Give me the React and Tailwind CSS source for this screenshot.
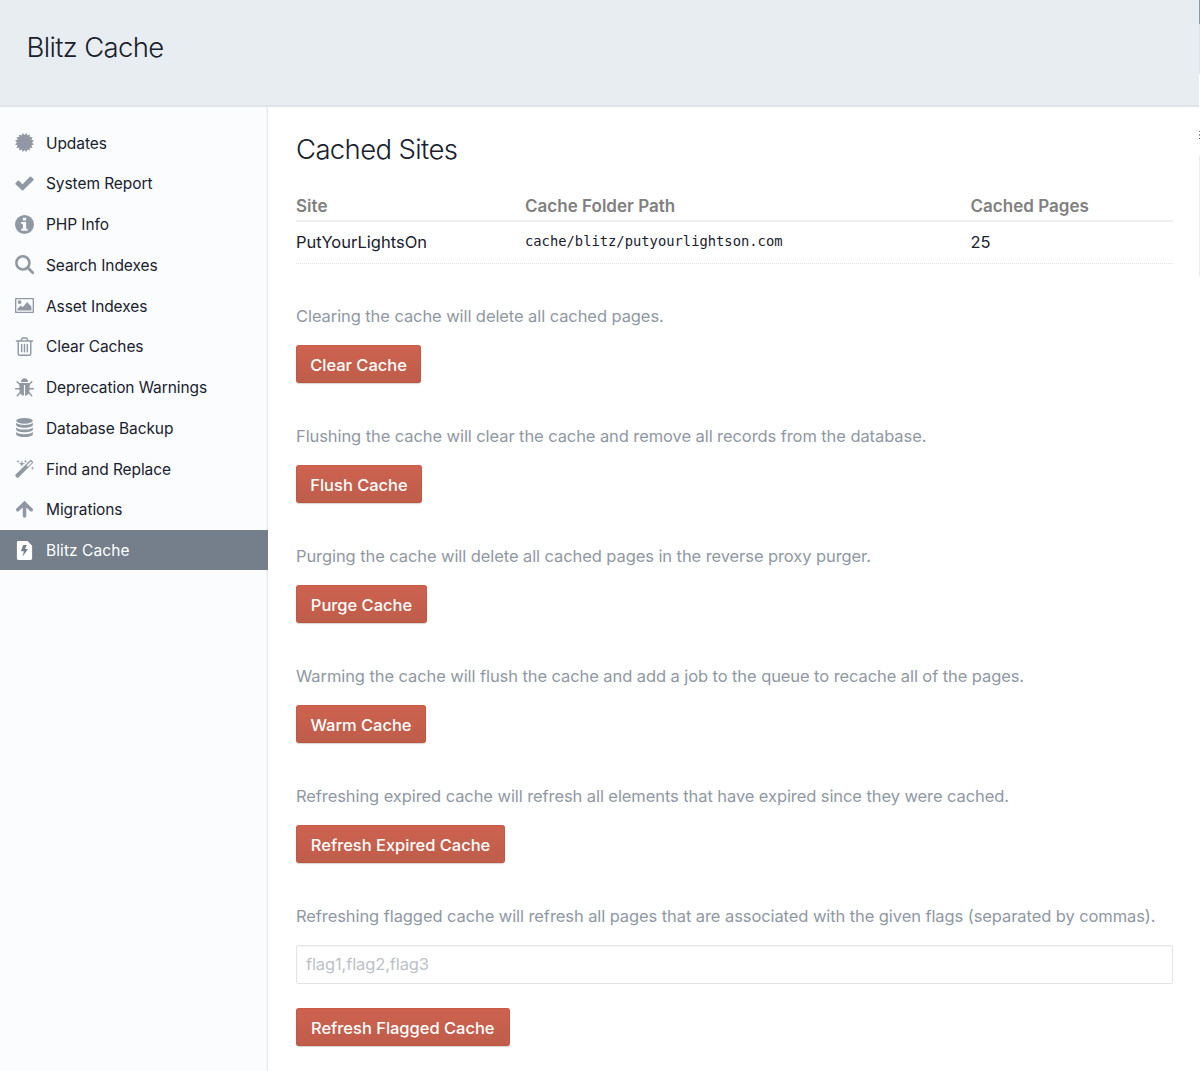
const burstPoints = Array.from({ length: 32 }, (_, i) => {
  const radius = i % 2 === 0 ? 10.2 : 7.9;
  const angle = ((i + 1) * Math.PI) / 16;
  return `${(10 + radius * Math.sin(angle)).toFixed(2)},${(10 - radius * Math.cos(angle)).toFixed(2)}`;
}).join(" ");

const icons = {
  burst: <polygon points={burstPoints} />,
  check: <path d="M0.600 9.400 2.900 7.100c.4-.4.9-.4 1.300 0l3.700 3.600 7.800-7.800c.4-.4.9-.4 1.300 0l2.400 2.400c.4.4.4.9 0 1.300L8.600 17c-.4.4-.9.4-1.300 0L.6 10.700c-.4-.4-.4-.9 0-1.300z" />,
  info: (
    <path
      fillRule="evenodd"
      d="M10 0a10 10 0 1 1 0 20A10 10 0 0 1 10 0zM8.3 2.8v2.9h3.4V2.8zM6.6 7.4v2h1.7v5H6.6v2.2h6.8v-2.2h-1.7v-7z"
    />
  ),
  search: (
    <g fill="none" stroke="currentColor">
      <circle cx="8.3" cy="8.3" r="6.9" strokeWidth="2.7" />
      <path d="m13.2 13.2 5.5 5.5" strokeWidth="2.9" strokeLinecap="round" />
    </g>
  ),
  image: (
    <>
      <path fillRule="evenodd" d="M1 2h18c.6 0 1 .4 1 1v14c0 .6-.4 1-1 1H1c-.6 0-1-.4-1-1V3c0-.6.4-1 1-1zm.4 1.4v13.2h17.2V3.400z" />
      <circle cx="4.8" cy="6.500" r="1.9" />
      <path d="M2.7 15.3v-2l3.400-3.300 2 1.900 4.700-5.500 4.500 5v3.900z" />
    </>
  ),
  trash: (
    <g fill="none" stroke="currentColor" strokeWidth="1.5" strokeLinecap="round" strokeLinejoin="round">
      <path d="M1.500 4.200h17M6.400 4l.8-2.200c.2-.6.5-.8 1-.8h3.600c.5 0 .8.200 1 .8l.8 2.200M3.400 4.500v13.100c0 .9.600 1.600 1.500 1.600h10.200c.9 0 1.500-.7 1.500-1.600V4.500M7 7.800v7.800M10 7.800v7.800M13 7.800v7.800" />
    </g>
  ),
  bug: (
    <>
      <path d="M6.300 4.300C6.300 1.700 7.900.2 10 .2s3.700 1.500 3.700 4.100z" />
      <path d="M4.700 5.300h10.600v7.200c0 3.500-1.700 5.700-4.700 6.200V7.300H9.400v11.400c-3-.5-4.700-2.700-4.700-6.200z" />
      <path
        d="m5.300 7-3-3M14.700 7l3-3M5.200 11.300H.7M14.800 11.300h4.500M5.700 14.900l-3.300 3.700M14.300 14.900l3.300 3.700"
        fill="none"
        stroke="currentColor"
        strokeWidth="1.5"
        strokeLinecap="round"
      />
    </>
  ),
  database: (
    <>
      <ellipse cx="10" cy="3" rx="8.800" ry="3" />
      <path d="M1.200 5.100C3 6.700 6.300 7.400 10 7.400s7-.7 8.800-2.300v2.300c0 1.600-4 2.900-8.800 2.900S1.200 9 1.200 7.400z" />
      <path d="M1.200 9.900c1.800 1.600 5.100 2.300 8.800 2.300s7-.7 8.800-2.300v2.300c0 1.600-4 2.900-8.800 2.900s-8.800-1.300-8.800-2.900z" />
      <path d="M1.200 14.700C3 16.300 6.300 17 10 17s7-.7 8.800-2.300V17c0 1.700-4 3-8.800 3s-8.800-1.300-8.800-3z" />
    </>
  ),
  wand: (
    <>
      <path
        fillRule="evenodd"
        d="M.4 16.700 15.900 1.200c.4-.4.9-.4 1.300 0l1.700 1.700c.4.4.4.9 0 1.300L3.400 19.700c-.4.4-.9.4-1.300 0L.4 18c-.4-.4-.4-.9 0-1.300zM16.500 2.600l-4.300 4.300 1.300 1.300 4.300-4.300z"
      />
      <path d="m3.200.6.5 1.400 1.400.5-1.400.5-.5 1.400L2.700 3l-1.400-.5L2.700 2zM7.200 1.500l.8 2.600 2.600.8L8 5.700l-.8 2.600-.8-2.600-2.600-.8 2.600-.8zM11 .5l.5 1.500 1.400.5-1.400.5-.5 1.400-.5-1.400-1.400-.5L10.500 2zM18.300 7.600l.5 1.500 1.400.5-1.400.5-.5 1.400-.5-1.400-1.400-.5 1.400-.5z" />
    </>
  ),
  arrow: (
    <path
      d="M10 16.800V4.500M2.900 10.200 10 3.400l7.100 6.800"
      fill="none"
      stroke="currentColor"
      strokeWidth="3.700"
      strokeLinecap="round"
      strokeLinejoin="miter"
    />
  ),
  blitz: (
    <path
      fillRule="evenodd"
      d="M3.500 0h9.700L18 4.900v13.600c0 .9-.6 1.500-1.500 1.500h-13c-.9 0-1.500-.6-1.500-1.500v-17C2 .6 2.600 0 3.500 0zM8.600 4.300 6.300 10.900h3l-1.200 5.300 5.600-7.800h-3l1.700-4.100z"
    />
  ),
};

const navItems = [
  ["Updates", "burst"],
  ["System Report", "check"],
  ["PHP Info", "info"],
  ["Search Indexes", "search"],
  ["Asset Indexes", "image"],
  ["Clear Caches", "trash"],
  ["Deprecation Warnings", "bug"],
  ["Database Backup", "database"],
  ["Find and Replace", "wand"],
  ["Migrations", "arrow"],
  ["Blitz Cache", "blitz"],
];

const actions = [
  { text: "Clearing the cache will delete all cached pages.", label: "Clear Cache", width: "w-[125px]" },
  { text: "Flushing the cache will clear the cache and remove all records from the database.", label: "Flush Cache", width: "w-[126px]" },
  { text: "Purging the cache will delete all cached pages in the reverse proxy purger.", label: "Purge Cache", width: "w-[131px]" },
  { text: "Warming the cache will flush the cache and add a job to the queue to recache all of the pages.", label: "Warm Cache", width: "w-[130px]" },
  { text: "Refreshing expired cache will refresh all elements that have expired since they were cached.", label: "Refresh Expired Cache", width: "w-[209px]" },
];

function Icon({ name }) {
  return (
    <svg viewBox="0 0 20 20" fill="currentColor" className="size-[19px] shrink-0 overflow-visible">
      {icons[name]}
    </svg>
  );
}

function NavItem({ label, icon, active }) {
  return (
    <li
      className={
        active
          ? "flex h-[40.75px] items-center gap-3 bg-[#747f8b] pl-[15px] text-white"
          : "flex h-[40.75px] items-center gap-3 pl-[15px] text-[#8f98a3]"
      }
    >
      <Icon name={icon} />
      <span
        className={
          active
            ? "whitespace-nowrap pt-[1.5px] text-[15.5px] tracking-[0.08px] text-white"
            : "whitespace-nowrap pt-[1.5px] text-[15.5px] tracking-[-0.08px] text-[#18212d]"
        }
      >
        {label}
      </span>
    </li>
  );
}

function SubmitButton({ label, width }) {
  return (
    <button
      className={`${width} block h-[38.5px] whitespace-nowrap rounded-[3px] bg-linear-to-b from-[#cd6350] to-[#bf5c4a] pt-[3px] text-center text-[16.5px] font-medium tracking-[-0.02px] text-white shadow-[inset_0_0_0_1px_rgba(196,70,35,0.28),0_1px_1px_rgba(31,41,51,0.2)]`}
    >
      {label}
    </button>
  );
}

function Description({ children }) {
  return <p className="whitespace-nowrap leading-6 tracking-[-0.085px] text-[#8f98a3]">{children}</p>;
}

export default function App() {
  return (
    <div className="flex h-[1071px] w-[1200px] overflow-hidden bg-white font-['Inter','Liberation_Sans',sans-serif] text-[16.5px] text-[#18212d]">
      <div className="flex w-[1199px] flex-col">
        <header className="h-[107px] shrink-0 border-b-2 border-[#e1e5e9] bg-[#e8edf1] pl-[26.5px] pt-[29px]">
          <h1 className="text-[27.5px] font-[350] leading-9 tracking-[-0.65px]">Blitz Cache</h1>
        </header>
        <div className="flex flex-1">
          <nav className="w-[267.5px] shrink-0 bg-[#fbfcfe] pt-[15.2px] shadow-[inset_-1.5px_0_0_#ebecee]">
            <ul>
              {navItems.map(([label, icon]) => (
                <NavItem key={label} label={label} icon={icon} active={icon === "blitz"} />
              ))}
            </ul>
          </nav>
          <main className="w-[905.5px] shrink-0 pl-[28.5px] pt-6">
            <h2 className="text-[27.5px] font-[350] leading-9 tracking-[-0.63px]">Cached Sites</h2>
            <div className="mt-6 grid h-[31px] grid-cols-[229px_445.5px_1fr] border-b-2 border-[#eeeff0] pt-[3px] text-[17px] font-semibold leading-6 tracking-[0.02px] text-[#808080]">
              <span>Site</span>
              <span>Cache Folder Path</span>
              <span>Cached Pages</span>
            </div>
            <div className="grid h-[41.5px] grid-cols-[229px_445.5px_1fr] border-b border-dotted border-[#dfe1e3] pt-2 leading-6">
              <span>PutYourLightsOn</span>
              <code className="whitespace-nowrap font-['DejaVu_Sans_Mono',monospace] text-[13.8px] leading-[22px]">cache/blitz/putyourlightson.com</code>
              <span>25</span>
            </div>
            <div className="mt-10">
              {actions.map((action) => (
                <section key={action.label} className="flex h-[120px] flex-col gap-[17px] last:h-[120.5px]">
                  <Description>{action.text}</Description>
                  <SubmitButton label={action.label} width={action.width} />
                </section>
              ))}
            </div>
            <Description>Refreshing flagged cache will refresh all pages that are associated with the given flags (separated by commas).</Description>
            <input
              placeholder="flag1,flag2,flag3"
              className="mt-[17px] block h-[38.5px] w-[877px] rounded-[2px] border border-[#e2e4e6] bg-white px-[9px] tracking-[-0.12px] shadow-[inset_0_1px_1px_#f5f6f7] placeholder:text-[#bcc1c7]"
            />
            <div className="mt-6">
              <SubmitButton label="Refresh Flagged Cache" width="w-[213.5px]" />
            </div>
          </main>
        </div>
      </div>
      <div className="flex w-px shrink-0 flex-col">
        <div className="h-6 bg-[#8d9aa8]" />
        <div className="h-[50px] bg-[#dee6ed]" />
        <div className="mt-[57px] h-px bg-[#777777]" />
        <div className="mt-[2px] h-[2px] bg-[#999999]" />
        <div className="mt-[2px] h-px bg-[#444444]" />
        <div className="mt-[17px] h-[120px] bg-[#ebecee]" />
      </div>
    </div>
  );
}
